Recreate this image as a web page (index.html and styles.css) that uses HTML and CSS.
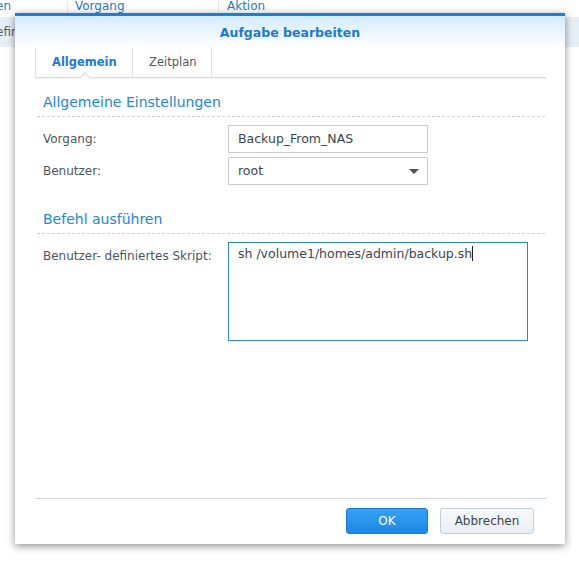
FILE: index.html
```html
<!DOCTYPE html>
<html lang="de">
<head>
    <meta charset="UTF-8">
    <title>Aufgabe bearbeiten</title>
    <link rel="stylesheet" href="styles.css">
</head>
<body>

    <!-- Liste im Hintergrund -->
    <div class="grid">
        <div class="grid-head">
            <span class="col col-a">en</span>
            <span class="col col-b">Vorgang</span>
            <span class="col col-c">Aktion</span>
        </div>
        <div class="grid-row">
            <span class="col col-a">efin</span>
        </div>
    </div>

    <div class="dialog">
        <div class="dialog-title">Aufgabe bearbeiten</div>

        <div class="dialog-body">
            <div class="tabs">
                <div class="tab active">Allgemein</div>
                <div class="tab">Zeitplan</div>
            </div>

            <h3 class="section">Allgemeine Einstellungen</h3>
            <div class="row">
                <label class="label">Vorgang:</label>
                <div class="field">Backup_From_NAS</div>
            </div>
            <div class="row">
                <label class="label">Benutzer:</label>
                <div class="field select">root<span class="arrow"></span></div>
            </div>

            <h3 class="section section-2">Befehl ausführen</h3>
            <div class="row">
                <label class="label label-top">Benutzer- definiertes Skript:</label>
                <div class="field textarea">sh /volume1/homes/admin/backup.sh<span class="caret"></span></div>
            </div>
        </div>

        <div class="dialog-footer">
            <button class="btn btn-primary">OK</button>
            <button class="btn">Abbrechen</button>
        </div>
    </div>

</body>
</html>
```

FILE: styles.css
```css
body {
    margin: 0;
    font-family: "DejaVu Sans", Verdana, sans-serif;
    background-color: #fff;
    position: relative;
    height: 563px;
    overflow: hidden;
}

/* Hintergrund-Liste */
.grid-head {
    height: 17px;
    display: flex;
    font-size: 12px;
    color: #2a78c6;
    line-height: 12px;
}
.grid-head .col {
    border-right: 1px solid #e4e8ec;
}
.col-a { width: 71px; margin-left: -4px; }
.col-b { width: 143px; padding-left: 7px; }
.col-c { padding-left: 8px; border-right: none !important; }
.grid-row {
    height: 30px;
    background-color: #e6eef6;
    font-size: 12px;
    color: #55606a;
    line-height: 30px;
}

/* Dialog */
.dialog {
    position: absolute;
    left: 15px;
    top: 13px;
    width: 550px;
    height: 531px;
    background-color: #fff;
    border-top: 3px solid #1a7fd5;
    box-shadow: 0 2px 8px rgba(0, 0, 0, 0.45);
    display: flex;
    flex-direction: column;
    box-sizing: border-box;
}
.dialog-title {
    height: 31px;
    line-height: 33px;
    text-align: center;
    font-size: 12.5px;
    font-weight: bold;
    color: #1c7ad0;
    background: linear-gradient(#d3ebfc, #ffffff);
}
.dialog-body {
    flex: 1;
    padding: 0 19px 0 20px;
}

/* Tabs */
.tabs {
    display: flex;
    height: 30px;
    border-bottom: 1px solid #d6dadf;
    box-shadow: 0 1px 1px rgba(0, 0, 0, 0.04);
}
.tab {
    position: relative;
    width: 79px;
    padding-left: 16px;
    box-sizing: border-box;
    line-height: 30px;
    font-size: 11.5px;
    color: #505a64;
    border-right: 1px solid #e2e5e8;
}
.tab.active {
    width: 98px;
    color: #1c7ad0;
    font-weight: bold;
    border-left: 1px solid #e2e5e8;
}
.tab.active::after {
    content: "";
    position: absolute;
    left: 45px;
    bottom: -5px;
    width: 7px;
    height: 7px;
    background: #fff;
    border-left: 1px solid #d6dadf;
    border-top: 1px solid #d6dadf;
    transform: rotate(45deg);
}

/* Abschnitte */
.section {
    margin: 16px 1px 0 2px;
    padding: 0 0 5px 6px;
    font-size: 14px;
    font-weight: normal;
    line-height: 17px;
    color: #2187d8;
    border-bottom: 1px dashed #cdd3d9;
}
.section-2 {
    margin-top: 26px;
}
.row {
    display: flex;
    margin-top: 4px;
}
.section + .row {
    margin-top: 8px;
}
.label {
    width: 193px;
    padding-left: 8px;
    box-sizing: border-box;
    font-size: 12px;
    line-height: 28px;
    color: #4c5660;
}
.label-top {
    line-height: 15px;
    padding-top: 7px;
}
.field {
    position: relative;
    width: 200px;
    height: 28px;
    box-sizing: border-box;
    border: 1px solid #c9cdd2;
    padding-left: 9px;
    font-size: 12.5px;
    line-height: 26px;
    color: #3c444c;
}
.arrow {
    position: absolute;
    right: 8px;
    top: 11px;
    border-left: 5px solid transparent;
    border-right: 5px solid transparent;
    border-top: 5px solid #4a5058;
}
.textarea {
    width: 300px;
    height: 99px;
    border-color: #2a86d6;
    line-height: 20px;
    padding-top: 1px;
}
.caret {
    display: inline-block;
    width: 1px;
    height: 15px;
    background: #222;
    vertical-align: -3px;
}

/* Fuss */
.dialog-footer {
    margin: 0 19px 0 20px;
    border-top: 1px solid #d6dadf;
    padding: 9px 12px 10px 0;
    display: flex;
    justify-content: flex-end;
    gap: 12px;
}
.btn {
    height: 26px;
    padding: 0;
    width: 94px;
    font-family: "DejaVu Sans", Verdana, sans-serif;
    font-size: 12px;
    color: #3c444c;
    background: linear-gradient(#f8fafc, #e9eef3);
    border: 1px solid #c5ccd3;
    border-radius: 3px;
}
.btn-primary {
    width: 82px;
    color: #fff;
    background: linear-gradient(#35a1f4, #1d88e6);
    border-color: #1b7bd3;
}
```
